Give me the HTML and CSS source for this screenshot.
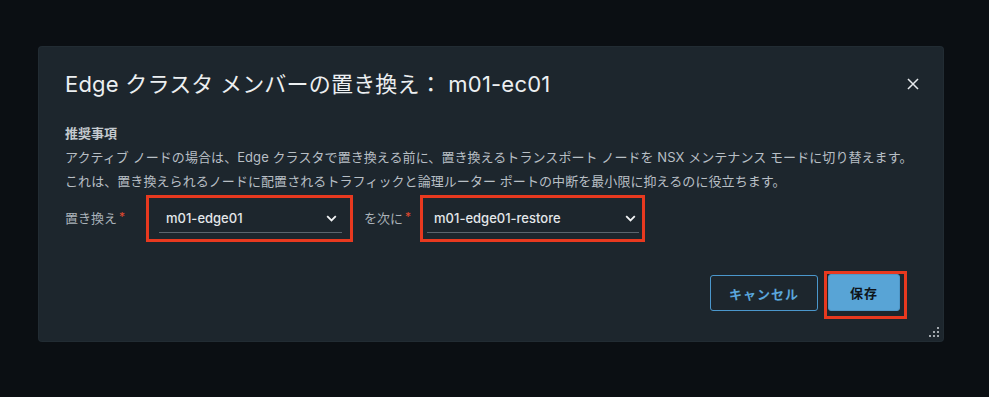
FILE: index.html
```html
<!DOCTYPE html>
<html lang="ja">
<head>
<meta charset="utf-8">
<title>Edge クラスタ メンバーの置き換え</title>
<link rel="stylesheet" href="styles.css">
</head>
<body>
<div class="dialog">
  <div class="header">
    <h1 class="title">Edge クラスタ メンバーの置き換え： m01-ec01</h1>
    <button class="close" aria-label="閉じる">
      <svg width="12" height="12" viewBox="0 0 12 12"><path d="M1.5 1.5 L10.5 10.5 M10.5 1.5 L1.5 10.5" stroke="#e6e9ec" stroke-width="1.5" fill="none" stroke-linecap="square"/></svg>
    </button>
  </div>
  <div class="body">
    <div class="rec-title">推奨事項</div>
    <p class="rec-text">アクティブ ノードの場合は、Edge クラスタで置き換える前に、置き換えるトランスポート ノードを NSX メンテナンス モードに切り替えます。</p>
    <p class="rec-text">これは、置き換えられるノードに配置されるトラフィックと論理ルーター ポートの中断を最小限に抑えるのに役立ちます。</p>
    <div class="form-row">
      <label class="label">置き換え<span class="req">*</span></label>
      <div class="mark mark-a">
        <div class="select select-a">
          <span class="value">m01-edge01</span>
          <svg class="chev" width="11" height="7" viewBox="0 0 11 7"><path d="M1.2 1.2 L5.5 5.5 L9.8 1.2" stroke="#f2f4f6" stroke-width="1.8" fill="none"/></svg>
        </div>
      </div>
      <label class="label label-b">を次に<span class="req">*</span></label>
      <div class="mark mark-b">
        <div class="select select-b">
          <span class="value">m01-edge01-restore</span>
          <svg class="chev" width="11" height="7" viewBox="0 0 11 7"><path d="M1.2 1.2 L5.5 5.5 L9.8 1.2" stroke="#f2f4f6" stroke-width="1.8" fill="none"/></svg>
        </div>
      </div>
    </div>
  </div>
  <div class="footer">
    <button class="btn btn-outline">キャンセル</button>
    <div class="mark mark-save">
      <button class="btn btn-primary">保存</button>
    </div>
  </div>
  <svg class="grip" width="12" height="12" viewBox="0 0 12 12">
    <rect x="9" y="1" width="2" height="2" fill="#a3a9ae"/>
    <rect x="5" y="5" width="2" height="2" fill="#a3a9ae"/>
    <rect x="9" y="5" width="2" height="2" fill="#a3a9ae"/>
    <rect x="1" y="9" width="2" height="2" fill="#a3a9ae"/>
    <rect x="5" y="9" width="2" height="2" fill="#a3a9ae"/>
    <rect x="9" y="9" width="2" height="2" fill="#a3a9ae"/>
  </svg>
</div>
</body>
</html>
```

FILE: styles.css
```css
* { box-sizing: border-box; }
html, body {
  margin: 0;
  padding: 0;
  background: #0b0f13;
  height: 100%;
}
body {
  font-family: "Inter", "Noto Sans CJK JP", sans-serif;
  padding-top: 47px;
  padding-left: 39px;
}
.dialog {
  position: relative;
  width: 904px;
  height: 294px;
  background: #1d262d;
  border-radius: 3px;
  box-shadow: 0 0 0 1px #222c33;
}
.header {
  display: flex;
  justify-content: space-between;
  align-items: center;
  padding: 22px 24px 0 26px;
}
.title {
  margin: 0;
  font-size: 22px;
  line-height: 30px;
  font-weight: 400;
  letter-spacing: 0.2px;
  color: #eceff1;
}
.close {
  background: none;
  border: 0;
  padding: 0;
  width: 12px;
  height: 12px;
  display: flex;
}
.body {
  padding: 22px 26px 0 26px;
}
.rec-title {
  font-size: 13px;
  line-height: 24px;
  font-weight: 700;
  color: #c4cacf;
}
.rec-text {
  margin: 0;
  font-size: 13px;
  line-height: 24px;
  letter-spacing: 0.07px;
  color: #b8bfc5;
}
.form-row {
  display: flex;
  align-items: center;
  margin-top: 2px;
}
.label {
  font-size: 13px;
  color: #aab2b9;
  line-height: 20px;
  margin-right: 21px;
}
.label-b {
  margin-left: 11px;
  margin-right: 9px;
}
.req {
  color: #e0492f;
  font-size: 12px;
  margin-left: 2px;
  position: relative;
  top: -2px;
}
.mark {
  border: 3px solid #e8391f;
}
.mark-a {
  width: 207px;
  padding: 7px 8px 6px 10px;
}
.mark-b {
  width: 225px;
  padding: 7px 3px 6px 4px;
}
.select {
  display: flex;
  justify-content: space-between;
  align-items: center;
  height: 28px;
  border-bottom: 1px solid #5b656e;
  padding: 0 5px 0 7px;
}
.select-b { padding-left: 7px; padding-right: 3px; }
.value {
  font-size: 13px;
  font-weight: 500;
  color: #e4e7ea;
  line-height: 27px;
}
.chev { display: block; }
.footer {
  display: flex;
  justify-content: flex-end;
  align-items: flex-start;
  padding: 29px 36px 0 0;
}
.btn {
  font-family: "Inter", "Noto Sans CJK JP", sans-serif;
  font-size: 13px;
  font-weight: 700;
  border-radius: 3px;
  letter-spacing: 1px;
  cursor: pointer;
}
.btn-outline {
  margin-top: 4px;
  margin-right: 6px;
  width: 108px;
  height: 36px;
  background: transparent;
  border: 1px solid #4b97cc;
  color: #5aa6dc;
}
.mark-save {
  padding: 0 4px 5px 1px;
}
.btn-primary {
  display: block;
  width: 72px;
  height: 37px;
  background: #58a4d6;
  border: 1px solid #4f97c8;
  color: #0f151a;
}
.grip {
  position: absolute;
  right: 3px;
  bottom: 3px;
}
```
